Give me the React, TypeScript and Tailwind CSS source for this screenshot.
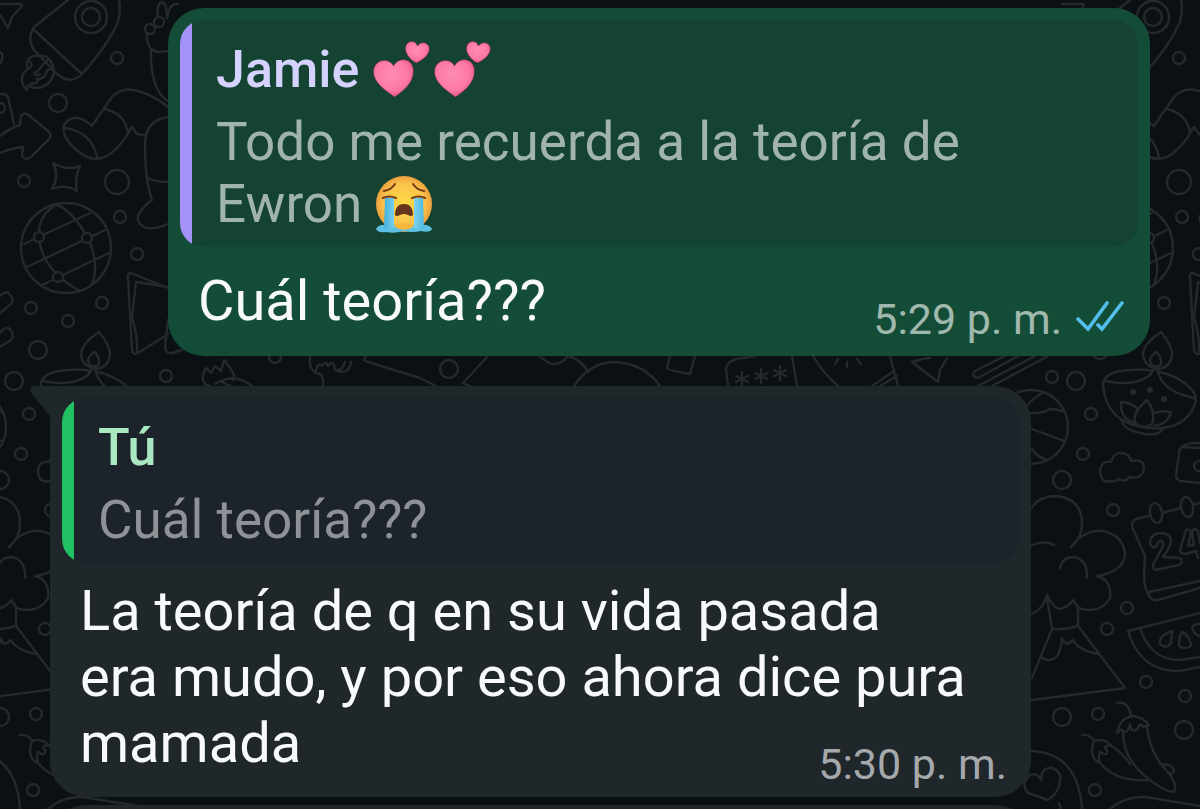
import type { ReactNode } from "react";

// One tile of the wallpaper is 1062px wide and repeats sideways.
const TILE_OFFSETS = [-1062, 0, 1062];

const DOODLE_CIRCLES = [
  [91, 17, 16], [91, 17, 9], [117, 58, 6], [58, 103, 9], [24, 181, 6],
  [117, 182, 12], [120, 217, 6], [137, 254, 6], [102, 303, 6], [31, 308, 6],
  [68, 321, 6], [38, 350, 9], [166, 376, 6], [150, 29, 5],
  [159, 22, 5], [0, 108, 5], [275, 357, 6], [449, 369, 9], [1052, 377, 6],
  [1076, 381, 9], [1091, 414, 6], [1083, 454, 6], [1062, 480, 9],
  [1113, 510, 6], [1031, 427, 37], [1199, 466, 5], [1127, 608, 6],
  [1107, 629, 6], [1146, 682, 6], [1185, 696, 6], [1062, 717, 9],
  [1098, 714, 6], [1184, 730, 9], [1095, 790, 6], [66, 248, 45],
];

const DOODLE_PATHS = [
  // star, rocket and its flame
  "M0 4L20 4Q23 5 21 7L12 17L8 28L0 15",
  "M68 0L34 27Q26 40 35 51L56 73Q70 86 82 74Q108 45 118 22Q121 10 119 0M33 29L82 74",
  "M40 56C30 54 24 61 28 69C20 74 20 84 27 90C25 82 30 88 38 88C50 86 56 76 53 66C50 58 45 55 40 56M49 59C42 62 43 69 34 73Q36 77 40 74M53 69Q46 69 46 74Q44 79 37 79Q40 83 30 84M28 69Q34 66 30 62",
  // tag and arrow
  "M0 94Q6 93 8 97L14 124M0 52Q5 54 0 64",
  "M0 136Q10 128 20 125L21 116Q24 111 30 116L49 132Q52 135 49 139L31 157Q25 161 22 156L23 147Q12 148 0 153",
  // sock
  "M92 126Q100 114 112 97Q122 86 138 91Q155 96 168 107M92 126Q74 110 64 125Q61 138 78 151Q94 165 110 154Q122 145 130 130L132 127L137 134L144 135M105 109Q126 114 128 134M65 128Q92 132 97 157",
  // hands
  "M147 33Q146 50 158 52L168 51M151 50Q150 90 168 101M158 17Q156 4 162 2Q167 3 167 18Q170 2 178 4",
  "M168 117Q145 120 145 145Q145 180 152 200Q136 212 138 221Q145 234 168 224M148 178Q155 182 168 182",
  // sparkle
  "M53 163Q66 171 80 166Q74 178 77 191Q65 184 52 189Q60 177 53 163Z",
  // globe
  "M24 244L90 213M27 267L105 230M42 285L109 253M56 205Q38 215 39 236Q41 270 80 291M54 204Q70 207 88 238Q100 265 92 284",
  // pills and map
  "M0 296Q6 289 10 295Q15 300 10 305L0 313M0 333Q6 325 10 329Q15 336 11 340L0 347",
  "M168 288L131 273Q127 273 128 278L132 350Q133 356 138 353L168 334M168 287L136 282L132 318Q138 336 137 352M168 320L165 346Q165 354 172 353L182 350",
  // oil lamp
  "M99 332Q110 345 110 355Q108 368 96 369Q82 367 81 354Q82 343 99 332ZM95 352Q102 362 97 367Q88 367 88 360Q90 354 95 352Z",
  "M1103 383Q1106 371 1130 370Q1145 369 1152 371M1105 381Q1135 387 1150 375L1156 366M1157 366Q1158 385 1180 394L1196 399M1158 372Q1168 373 1180 380Q1196 390 1196 400Q1190 425 1162 428M1103 383Q1104 408 1122 420Q1122 430 1145 434Q1160 436 1163 428Q1140 430 1122 420",
  "M1147 400Q1130 415 1136 424Q1145 430 1152 424Q1156 412 1147 400ZM1136 423Q1120 420 1121 402Q1130 402 1138 409M1154 426Q1168 424 1171 412Q1162 410 1154 413",
  // ball
  "M1026 407Q1035 396 1043 393M1026 413Q1042 414 1050 409Q1060 410 1065 412M1032 429L1064 441M1032 449Q1037 457 1045 459",
  // cloud
  "M1112 481Q1100 484 1100 470Q1102 460 1111 462Q1114 452 1122 453Q1130 454 1131 461Q1144 458 1144 469Q1142 480 1129 477Q1125 483 1118 479Q1115 482 1112 481Z",
  // wallet
  "M1200 448L1182 447Q1179 448 1179 454L1176 475Q1176 480 1181 481L1200 483M1182 447Q1188 442 1200 443",
  // calendar
  "M1148 516L1136 519Q1130 522 1133 529L1145 556L1144 575Q1144 590 1150 597Q1152 601 1158 600L1200 588M1149 592L1200 581M1162 513L1181 508M1193 505L1200 503",
  // smoke and volcano
  "M1032 507Q1040 496 1055 496Q1082 498 1082 524Q1082 538 1071 547M1079 538Q1092 529 1103 531Q1125 536 1125 556Q1122 572 1097 576Q1112 580 1110 598Q1100 615 1078 608M1032 545Q1045 540 1054 545M1060 568Q1062 557 1074 557Q1088 560 1087 578",
  "M1032 614Q1044 608 1047 595Q1054 609 1060 609Q1070 606 1073 600L1078 607V626Q1065 630 1052 629L1047 597M1052 629L1032 678M1078 626L1125 688L1032 700M1041 657Q1050 664 1058 655Q1062 645 1062 638Q1066 646 1069 643L1073 640Q1078 650 1098 654",
  // watermelon
  "M1200 613L1128 631Q1140 672 1180 671L1200 667M1140 628Q1150 660 1180 660L1200 657M1172 631Q1158 636 1160 644Q1166 650 1171 643ZM1182 632Q1176 645 1182 648Q1192 648 1191 644Q1188 634 1182 632ZM1200 624Q1190 624 1193 630Q1196 636 1200 636",
  // chillies
  "M1117 703Q1128 700 1131 716M1117 733Q1120 717 1134 716Q1144 718 1149 725L1143 727Q1140 722 1138 728Q1132 735 1130 724Q1128 734 1123 731Q1122 728 1117 733ZM1123 732Q1123 760 1150 780Q1165 792 1174 792Q1178 785 1168 772Q1150 755 1147 727M1160 764Q1174 764 1174 772Q1170 774 1168 773",
  "M1082 735Q1090 734 1094 741Q1088 758 1100 763Q1098 757 1100 752Q1108 757 1107 750Q1102 746 1111 745Q1104 738 1094 741M1110 745Q1122 752 1130 764M1100 763Q1116 782 1148 780",
  // heart in a ring
  "M1022 751Q1078 748 1082 809M1041 780Q1038 772 1030 775Q1020 784 1028 793L1048 800Q1062 790 1060 775Q1054 764 1044 770Q1041 774 1041 780ZM1059 803L1061 809M1110 809Q1125 796 1145 797L1200 806",
  // strip between the bubbles
  "M205 384Q201 378 204 372L206 368L211 373L215 366L221 371L224 360L230 368Q236 376 233 380M205 384L210 386M215 384Q235 372 252 386M222 382L230 386",
  "M310 356Q308 372 320 374Q324 378 323 386M316 370Q318 362 322 366Q326 360 328 366Q334 358 335 370Q342 372 345 362M335 370Q349 376 351 362",
  "M366 356Q362 361 368 362L420 378L436 386M488 356L463 383L470 386M540 356Q555 372 568 356Q582 360 588 372M574 386Q590 362 615 362Q645 364 660 386",
  "M670 356L667 368Q667 370 690 374L695 356M728 386L726 370Q726 362 736 359L755 356M792 356L797 386M813 356Q822 372 838 386M835 364L838 359M847 362V367M857 359L861 364M890 356L898 386M872 386L894 371M880 386L897 376",
  "M742 372V386M736 376L748 382M748 376L736 382M761 369V383M755 373L767 379M767 373L755 379M780 366V380M774 370L786 376M786 370L774 376",
  "M912 362Q925 358 930 358M912 362L938 382L940 370L947 358M1005 356L975 371Q970 376 978 378L1018 356M978 386L1035 356M992 386L1048 356",
];

function Doodles() {
  return (
    <g>
      {DOODLE_PATHS.map((d) => (
        <path key={d} d={d} />
      ))}
      {DOODLE_CIRCLES.map(([cx, cy, r]) => (
        <circle key={`${cx}-${cy}-${r}`} cx={cx} cy={cy} r={r} />
      ))}
      <g fill="#0b1014">
        <circle cx="39" cy="237" r="5" />
        <circle cx="87" cy="238" r="5" />
        <circle cx="58" cy="277" r="5" />
        <ellipse cx="1156" cy="513" rx="6" ry="10" transform="rotate(-10 1156 513)" />
        <ellipse cx="1187" cy="507" rx="6" ry="10" transform="rotate(-10 1187 507)" />
      </g>
      <g fill="#24292d" stroke="none">
        <circle cx="1133" cy="392" r="3" />
        <circle cx="1150" cy="390" r="3" />
        <circle cx="1164" cy="399" r="3" />
      </g>
      <path d="M1150 543Q1150 534 1160 533Q1171 533 1171 541Q1170 548 1163 557L1180 558Q1184 562 1179 565L1156 570Q1151 569 1154 563L1163 546Q1164 540 1160 541Q1157 543 1156 547Q1151 548 1150 543ZM1186 530L1180 550Q1180 554 1186 554L1196 551L1198 558M1186 530Q1190 528 1191 533L1188 546L1194 545L1192 532Q1194 527 1198 531L1200 543" />
    </g>
  );
}

function Wallpaper() {
  return (
    <svg
      aria-hidden="true"
      viewBox="0 0 1200 809"
      preserveAspectRatio="xMidYMin slice"
      className="absolute inset-0 w-full h-full"
      fill="none"
      stroke="#24292d"
      strokeWidth="2.4"
      strokeLinejoin="round"
      strokeLinecap="round"
    >
      {TILE_OFFSETS.map((x) => (
        <g key={x} transform={`translate(${x} 0)`}>
          <Doodles />
        </g>
      ))}
    </svg>
  );
}

function TwoHearts() {
  return (
    <svg role="img" aria-label="Two hearts" viewBox="0 0 60 60" className="w-[61px] h-[60px]">
      <defs>
        <radialGradient id="heart" cx="0.45" cy="0.4" r="0.65">
          <stop offset="0" stopColor="#ff8db1" />
          <stop offset="0.65" stopColor="#fd78a3" />
          <stop offset="1" stopColor="#e0527f" />
        </radialGradient>
      </defs>
      <g fill="url(#heart)" stroke="#6b2a46" strokeWidth="0.6">
        <path d="M23 57C13 50 2 42 2 32C2 19 18 17 22 26C27 16 42 18 42 31C42 43 32 51 23 57Z" />
        <path d="M45 23C38 20 33 12 34 7C36 0 44 0 46 6C50 0 58 3 58 9C57 16 51 20 45 23Z" />
      </g>
    </svg>
  );
}

function LoudlyCrying() {
  return (
    <svg role="img" aria-label="Loudly crying face" viewBox="0 0 60 60" className="w-[60px] h-[60px]">
      <defs>
        <radialGradient id="face" cx="0.5" cy="0.5" r="0.52">
          <stop offset="0" stopColor="#fdd845" />
          <stop offset="0.7" stopColor="#fbc44c" />
          <stop offset="1" stopColor="#ea9a3c" />
        </radialGradient>
        <linearGradient id="tears" x1="0" x2="1" y1="0" y2="0">
          <stop offset="0" stopColor="#3fb0dc" />
          <stop offset="0.5" stopColor="#b4ebfa" />
          <stop offset="1" stopColor="#4db8e0" />
        </linearGradient>
      </defs>
      <circle cx="30" cy="30" r="28" fill="url(#face)" />
      <path d="M2 55Q5 50 13 51H47Q55 50 58 55Q56 59 47 57Q38 59 30 57Q20 60 12 58Q4 59 2 55Z" fill="#5cc0e2" />
      <path d="M20 50Q30 47 40 50L38 54Q30 57 22 54Z" fill="#f3b83c" />
      <path d="M11 24H20V54Q14 57 10 54ZM40 24H49L50 54Q45 57 40 54Z" fill="url(#tears)" />
      <path d="M21 41C21 33 25 30 30 30S39 33 39 41C37 44 34 40 30 40S23 44 21 41Z" fill="#66351d" />
      <g fill="none" stroke="#713b17" strokeWidth="2" strokeLinecap="round">
        <path d="M10 17Q17 16 21 10M39 10Q43 16 50 17" />
        <path d="M9 24Q15 21 22 24M38 24Q45 21 51 24" />
      </g>
    </svg>
  );
}

function ReadTicks() {
  return (
    <svg
      role="img"
      aria-label="Leído"
      viewBox="0 0 52 36"
      className="w-[52px] h-9"
      fill="none"
      stroke="#53bdeb"
      strokeWidth="3.6"
      strokeLinecap="round"
    >
      <path d="M4 18L14 28L33 2M24 24L28 28L48 2" />
    </svg>
  );
}

interface QuoteProps {
  author: ReactNode;
  barClass: string;
  boxClass: string;
  nameClass: string;
  textClass: string;
  children: ReactNode;
}

function Quote({ author, barClass, boxClass, nameClass, textClass, children }: QuoteProps) {
  return (
    <blockquote className={`flex rounded-3xl overflow-hidden ${boxClass}`}>
      <div className={`w-3 shrink-0 ${barClass}`} />
      <div className="px-6 pt-[19px] pb-3">
        <div className={`flex items-center gap-3 text-[52px] leading-[62px] font-medium ${nameClass}`}>
          {author}
        </div>
        <div className={`mt-[10px] text-[53px] leading-[62px] ${textClass}`}>{children}</div>
      </div>
    </blockquote>
  );
}

interface BubbleProps {
  className: string;
  bodyClass: string;
  textClass: string;
  quote: ReactNode;
  time: ReactNode;
  children: ReactNode;
}

function Bubble({ className, bodyClass, textClass, quote, time, children }: BubbleProps) {
  return (
    <article className={`relative rounded-[36px] px-3 pt-3 ${className}`}>
      {quote}
      {/* text and time share one cell so the time can sit beside a short last line */}
      <div className={`grid pl-[18px] pr-3 ${bodyClass}`}>
        <p className={`col-start-1 row-start-1 text-[56px] leading-[66px] text-[#f7f9fa] ${textClass}`}>
          {children}
        </p>
        <div className="col-start-1 row-start-1 self-end justify-self-end flex items-center gap-3 text-[43px] leading-[50px]">
          {time}
        </div>
      </div>
    </article>
  );
}

export default function App() {
  return (
    <main className="relative h-screen overflow-hidden bg-[#0b1014] font-['Roboto',sans-serif]">
      <Wallpaper />
      <div className="relative flex flex-col px-[50px] pt-2">
        <Bubble
          className="ml-[118px] pb-3 bg-[#144d37]"
          bodyClass="pt-[21px]"
          textClass="pb-[10px]"
          quote={
            <Quote
              author={
                <>
                  <span>Jamie</span>
                  <span className="flex">
                    <TwoHearts />
                    <TwoHearts />
                  </span>
                </>
              }
              boxClass="bg-[#154332]"
              barClass="bg-[#a492f8]"
              nameClass="text-[#d5d2ff]"
              textClass="text-[#a1b4ac]"
            >
              Todo me recuerda a la teoría de
              <br />
              <span className="flex items-center gap-3">
                Ewron <LoudlyCrying />
              </span>
            </Quote>
          }
          time={
            <>
              <time dateTime="17:29" className="text-[#a1b8af]">5:29 p. m.</time>
              <ReadTicks />
            </>
          }
        >
          Cuál teoría???
        </Bubble>

        <Bubble
          className="mt-[30px] mr-[119px] pb-2 bg-[#20272b]"
          bodyClass="pt-[15px]"
          textClass="pb-[13px]"
          quote={
            <>
              <svg aria-hidden="true" viewBox="0 0 56 36" className="absolute top-0 -left-5 w-14 h-9" fill="#20272b">
                <path d="M4 0H56V36H25L2 8Q-2 1 4 0Z" />
              </svg>
              <div className="relative">
                <Quote
                  author="Tú"
                  boxClass="bg-[#1d232a]"
                  barClass="bg-[#21c063]"
                  nameClass="text-[#a9e8c1]"
                  textClass="text-[#8e9297]"
                >
                  Cuál teoría???
                </Quote>
              </div>
            </>
          }
          time={<time dateTime="17:30" className="text-[#a5a9ac]">5:30 p. m.</time>}
        >
          La teoría de q en su vida pasada
          <br />
          era mudo, y por eso ahora dice pura
          <br />
          mamada
        </Bubble>

        <div className="mt-2 mr-[119px] h-24 shrink-0 rounded-[36px] bg-[#20272b]" />
      </div>
    </main>
  );
}
